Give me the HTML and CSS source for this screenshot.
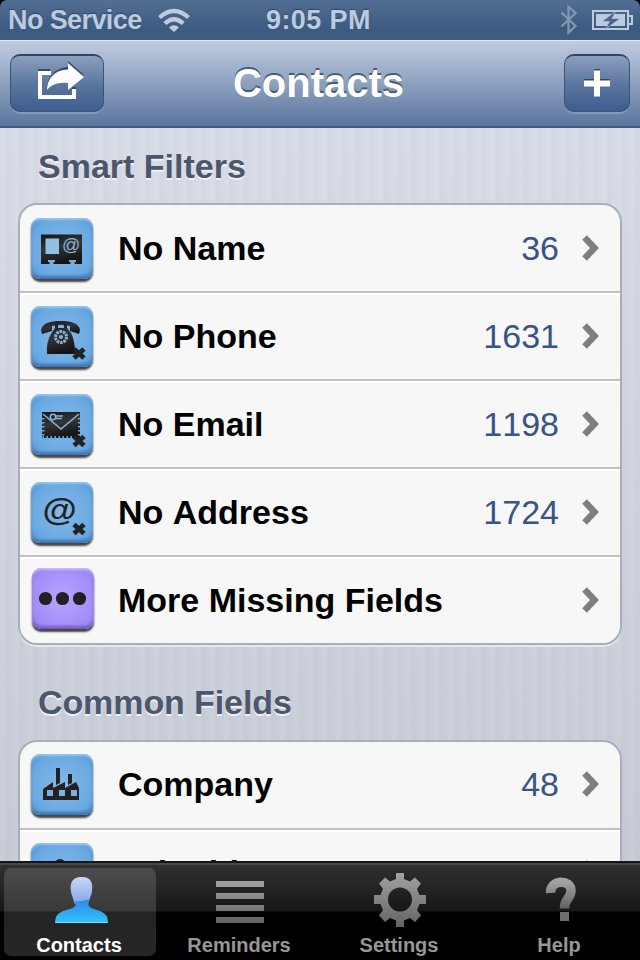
FILE: index.html
```html
<!DOCTYPE html>
<html lang="en">
<head>
<meta charset="utf-8">
<title>Contacts</title>
<link rel="stylesheet" href="styles.css">
</head>
<body>
<svg class="defs" width="0" height="0" aria-hidden="true">
  <defs>
    <linearGradient id="ink" x1="0" y1="0" x2="0.3" y2="1"><stop offset="0" stop-color="#161616"/><stop offset=".5" stop-color="#353535"/><stop offset="1" stop-color="#151515"/></linearGradient>
    <linearGradient id="grey" x1="0" y1="0" x2="0" y2="1"><stop offset="0" stop-color="#a2a2a2"/><stop offset="1" stop-color="#626262"/></linearGradient>
    <linearGradient id="head" x1="0" y1="0" x2="0" y2="1"><stop offset="0" stop-color="#c9d6f6"/><stop offset="1" stop-color="#83a6e6"/></linearGradient>
    <linearGradient id="bust" x1="0" y1="0" x2="0" y2="1"><stop offset="0" stop-color="#2f86ea"/><stop offset="1" stop-color="#31c5fa"/></linearGradient>
    <path id="cross" d="M-5-4.500 5 4.500M5-4.500-5 4.500" stroke="#222" stroke-width="4.800"/>
    <path id="chev" d="M2.500 2.500 12.500 13 2.500 23.500" fill="none" stroke="#7f7f7f" stroke-width="6.500"/>
  </defs>
</svg>
<div class="phone">
  <header class="status">
    <span class="carrier">No Service</span>
    <svg class="wifi" width="32" height="24" viewBox="0 0 32 24"><g fill="none" stroke="#bccbdf" stroke-width="4.200"><path d="M1.500 9.500Q16-3.500 30.500 9.500"/><path d="M6.800 15.500Q16 7 25.200 15.500"/></g><path d="M11 19.500Q16 15 21 19.500L16 24Z" fill="#bccbdf"/></svg>
    <span class="clock">9:05 PM</span>
    <svg class="bluetooth" width="18" height="32" viewBox="0 0 18 32"><path d="M1.500 8.500 15.500 22 8.500 28.500V3L15.500 9 1.500 22.500" fill="none" stroke="#8097b4" stroke-width="2.300"/></svg>
    <svg class="battery" width="44" height="22" viewBox="0 0 44 22"><path d="M2 2H37V20H2Z" fill="none" stroke="#bccbdf" stroke-width="2"/><path d="M5 5H34V17H5Z" fill="#bccbdf"/><path d="M38 7H41V15H38" fill="none" stroke="#bccbdf" stroke-width="2"/><path d="M25 2 11 12.500H18.500L14 20.500 29 9.500H21Z" fill="#48648a" stroke="#bccbdf" stroke-width=".6"/></svg>
  </header>
  <nav class="navbar">
    <button class="navbtn share" aria-label="Share"><svg width="50" height="42" viewBox="0 0 50 42"><path d="M16 10H6V36H40V26" fill="none" stroke="#344a6b" stroke-width="4"/><path d="M34 0 50 14 34 27V20C23 19 17 22 13 28 13 16 20 7 34 6Z" fill="#344a6b"/><path d="M17 12H6V36H40V28" fill="none" stroke="#fff" stroke-width="4"/><path d="M34 2 50 16 34 29V22C23 21 17 24 13 29 13 18 20 9 34 8.500Z" fill="#fff"/></svg></button>
    <h1>Contacts</h1>
    <button class="navbtn add" aria-label="Add"><svg width="26" height="28" viewBox="0 0 26 28"><path d="M10 0H16V10H26V16H0V10H10Z" fill="#344a6b"/><path d="M10 1.500H16V11.500H26V17.500H16V27.500H10V17.500H0V11.500H10Z" fill="#fff"/></svg></button>
  </nav>
  <main class="content">
    <h2>Smart Filters</h2>
    <section class="card">
      <div class="row"><span class="tile"><svg viewBox="0 0 62 62"><path fill="url(#ink)" d="M10 16.500H51V46H10Z"/><path d="M14.500 20.500H28V36H14.500Z" fill="#92bfe5"/><path fill="#79acdb" d="M17 42H24V44H22.500V46H18.500V44H17ZM38 42H45V44H43.500V46H39.500V44H38Z"/><text class="at-small" x="31" y="33">@</text></svg></span><span class="label">No Name</span><span class="count">36</span><svg class="chevron" viewBox="0 0 18 26"><use href="#chev"/></svg></div>
      <div class="row"><span class="tile"><svg viewBox="0 0 62 62"><path d="M10 24C11 17 20 15 30 15S48 17 49 24L48 28 39 25V20Q30 18 21 20V25L11 28Z" fill="url(#ink)"/><path d="M20 28 24 22V18H27V22H33V18H36V22L40 27Q44 34 44 48H16Q15 36 20 28Z" fill="url(#ink)"/><circle cx="30" cy="31" r="5.500" fill="none" stroke="#85b4dd" stroke-width="3" stroke-dasharray="2.500 .9"/><circle cx="30" cy="31" r="2" fill="#85b4dd"/><use href="#cross" transform="translate(48 47.500)"/></svg></span><span class="label">No Phone</span><span class="count">1631</span><svg class="chevron" viewBox="0 0 18 26"><use href="#chev"/></svg></div>
      <div class="row"><span class="tile"><svg viewBox="0 0 62 62"><rect x="11" y="18" width="38" height="26" fill="url(#ink)"/><path d="M11.500 24V44H45" fill="none" stroke="#6ca9df" stroke-width="4" stroke-dasharray="1.500 2.500"/><path d="M48.500 24V43" fill="none" stroke="#6ca9df" stroke-width="3" stroke-dasharray="1.500 2.500"/><path d="M12 20 30 35 48 20" fill="none" stroke="#89b6df" stroke-width="1.500"/><circle cx="22" cy="23" r="2.700" fill="none" stroke="#89b6df" stroke-width="1.500"/><path d="M25 22H32M25 24.500H31" stroke="#89b6df" stroke-width="1.300"/><use href="#cross" transform="translate(48 47)"/></svg></span><span class="label">No Email</span><span class="count">1198</span><svg class="chevron" viewBox="0 0 18 26"><use href="#chev"/></svg></div>
      <div class="row"><span class="tile"><svg viewBox="0 0 62 62"><text class="at-large" transform="translate(11 39) scale(1 .88)">@</text><use href="#cross" transform="translate(48 47)"/></svg></span><span class="label">No Address</span><span class="count">1724</span><svg class="chevron" viewBox="0 0 18 26"><use href="#chev"/></svg></div>
      <div class="row"><span class="tile violet"><svg viewBox="0 0 62 62"><g fill="#251f25"><circle cx="13.500" cy="30.500" r="6.600"/><circle cx="30.500" cy="30.500" r="6.600"/><circle cx="47.500" cy="30.500" r="6.600"/></g></svg></span><span class="label">More Missing Fields</span><svg class="chevron" viewBox="0 0 18 26"><use href="#chev"/></svg></div>
    </section>
    <h2 class="second">Common Fields</h2>
    <section class="card common">
      <div class="row"><span class="tile"><svg viewBox="0 0 62 62"><path fill="#222" fill-rule="evenodd" d="M12 46V35L22 28V34L34 28V34L45 28 48 34V46ZM16 36V42H22V36ZM28 36V42H34V36ZM40 36V42H46V36ZM25 14H29V29L25 31ZM37 20H41V29L37 31Z"/></svg></span><span class="label">Company</span><span class="count">48</span><svg class="chevron" viewBox="0 0 18 26"><use href="#chev"/></svg></div>
      <div class="row"><span class="tile"><svg viewBox="0 0 62 62"><circle cx="29" cy="22" r="6" fill="#222"/><path d="M16 45Q18 28 29 28T42 45Z" fill="#222"/></svg></span><span class="label">Job Title</span><span class="count">5</span><svg class="chevron" viewBox="0 0 18 26"><use href="#chev"/></svg></div>
    </section>
  </main>
  <footer class="tabs">
    <div class="tab active"><svg width="56" height="56" viewBox="0 0 56 56"><path d="M23 31C21 28 21 24 19.500 21 17.500 11 19 4 30 4 40 4 41.500 11 39.500 21 38 24 38 27 36 30Z" fill="url(#head)"/><path d="M22.500 28.500Q30 28.500 38 26L36.500 30V32C37.500 36 44 36 49 38.500Q56 41 56 50H3Q3 41 10 38.500C16 36 22 36 23.500 32V30Z" fill="url(#bust)"/><path d="M3.500 49.500H55.500" stroke="#83dcff"/></svg><span>Contacts</span></div>
    <div class="tab"><svg width="56" height="56" viewBox="0 0 56 56"><path d="M4 8H52V14H4ZM4 20H52V26H4ZM4 32H52V38H4ZM4 44H52V50H4Z" fill="url(#grey)"/></svg><span>Reminders</span></div>
    <div class="tab"><svg width="56" height="56" viewBox="0 0 56 56"><path fill="url(#grey)" fill-rule="evenodd" d="M24 0H32V6L38 8.500 43 4.500 49 10.500 45 16 47.500 22H54V31H47.500L45 37 49 42.500 43 49 38 45 32 47.500V54H24V47.500L18 45 13 49 7 42.500 11 37 8.500 31H2V22H8.500L11 16 7 10.500 13 4.500 18 8.500 24 6ZM40 26.500A12 12 0 1 0 16 26.500 12 12 0 1 0 40 26.500Z"/></svg><span>Settings</span></div>
    <div class="tab"><svg width="56" height="56" viewBox="0 0 56 56"><path fill="none" stroke="url(#grey)" stroke-width="9.500" d="M18.500 20C18 6 39 6 39 17.500 39 26 32.500 25 32.500 35.500"/><path d="M28 39H37V48H28Z" fill="#6d6d6d"/></svg><span>Help</span></div>
  </footer>
</div>
</body>
</html>
```

FILE: styles.css
```css
* { box-sizing: border-box; }
body {
  margin: 0;
  background: #000;
  font-family: "Liberation Sans", Arial, sans-serif;
  font-kerning: none;
}
.defs { position: absolute; }
.phone {
  width: 640px;
  height: 960px;
  display: flex;
  flex-direction: column;
  overflow: hidden;
}
.status {
  flex: none;
  height: 40px;
  display: flex;
  align-items: center;
  padding: 0 5px 0 8px;
  border-radius: 7px 7px 0 0;
  background: linear-gradient(#536f93, #3d5a80 70%, #3e5b82);
  color: #bccbdf;
  font-size: 27px;
  font-weight: bold;
  text-shadow: 0 -1px 1px #2f4668;
  white-space: nowrap;
}
.carrier { width: 150px; letter-spacing: -.6px; }
.wifi { flex: none; }
.clock { width: 110px; margin-left: 76px; letter-spacing: .4px; }
.bluetooth { margin-left: auto; }
.battery { margin-left: 13px; }
.navbar {
  flex: none;
  height: 88px;
  display: flex;
  justify-content: space-between;
  padding: 13px 10px 0;
  border-top: 1px solid #e3eaf3;
  border-bottom: 2px solid #3f5a83;
  background: linear-gradient(#c0cce0, #8b9fbe 52%, #5a759d);
}
.navbtn {
  height: 58px;
  display: flex;
  align-items: center;
  justify-content: center;
  padding: 0;
  border: 1px solid #3b5375;
  border-top: 2px solid #35435e;
  border-radius: 10px;
  background: linear-gradient(#8d9fbd, #5c779f 50%, #3d5d90);
  box-shadow: 0 2px 0 #8399ba;
}
.share { width: 94px; padding-bottom: 3px; padding-left: 3px; }
.add { width: 66px; padding-bottom: 2px; }
h1 {
  margin: 6px 0 0 28px;
  height: 48px;
  flex: 1;
  text-align: center;
  padding-right: 59px;
  line-height: 46px;
  font-size: 40px;
  color: #fff;
  text-shadow: 0 -2px 0 #475a77;
}
.content {
  flex: 1;
  min-height: 0;
  overflow: hidden;
  padding: 0 18px;
  background:
    repeating-linear-gradient(90deg, rgba(255,255,255,.05) 0 5px, rgba(70,80,110,.015) 5px 10px, transparent 10px 14px),
    linear-gradient(#d6dbe5, #c5cad5);
}
h2 {
  margin: 0;
  height: 75px;
  padding: 18px 0 0 20px;
  font-size: 34px;
  line-height: 40px;
  color: #4c566c;
  text-shadow: 0 2px 0 #eef1f6;
}
.second { height: 95px; padding-top: 37px; letter-spacing: -.1px; }
.card {
  width: 604px;
  border: 2px solid #a9adb7;
  border-radius: 19px;
  background: #f7f7f7;
  box-shadow: 0 2px 0 #e4e8ef;
}
.row {
  height: 88px;
  display: flex;
  align-items: center;
  padding: 0 20px 0 11px;
  border-bottom: 2px solid #c1c1c1;
  box-shadow: inset 0 2px 0 #fff;
}
.row:first-child { box-shadow: none; }
.row:last-child { border-bottom: 0; height: 86px; }
.common .row { padding-bottom: 2px; }
.common .row:last-child { padding-bottom: 0; }
.tile {
  flex: none;
  width: 62px;
  height: 61px;
  border-radius: 9px;
  background: radial-gradient(#85b8e8, #69a9e2 70%, #5795d2);
  box-shadow: inset 0 2px 2px #9ac5ec, inset 0 -3px 3px #4078b5, 0 3px 2px #444;
}
.tile svg { width: 62px; height: 62px; display: block; }
.tile.violet {
  margin-left: 1px;
  margin-right: -1px;
  margin-top: -3px;
  background: radial-gradient(#b9a5ff, #a48df8 70%, #927be8);
  box-shadow: inset 0 2px 2px #c7bbff, inset 0 -3px 3px #755cc4, 0 3px 2px #444;
}
.label {
  flex: 1;
  margin-left: 25px;
  font-size: 34px;
  line-height: 40px;
  font-weight: bold;
  color: #000;
}
.count { margin-right: 1px; font-size: 34px; line-height: 40px; color: #385487; }
.common .row:last-child .label,
.common .row:last-child .count { margin-top: -2px; }
.chevron { flex: none; width: 18px; height: 26px; margin-left: 22px; }
.at-small { font: 18px "Liberation Sans", sans-serif; fill: #85b4dd; }
.at-large { font: italic bold 35px "Liberation Sans", sans-serif; fill: #222; }
.tabs {
  flex: none;
  height: 99px;
  display: flex;
  border-top: 2px solid #131517;
  background: linear-gradient(#494949 0 2px, #303030 2px, #171717 48px, #000 49px);
}
.tab {
  width: 152px;
  height: 88px;
  margin: 5px 4px 0;
  padding-top: 5px;
  display: flex;
  flex-direction: column;
  align-items: center;
  border-radius: 7px;
  color: #979797;
  font-size: 20px;
  line-height: 24px;
  font-weight: bold;
}
.tab svg { flex: none; overflow: visible; }
.tab span { margin: 4px 2px 0 0; }
.active { color: #fff; background: linear-gradient(#4b4b4b, #393939 43px, #242424 44px, #262626); }
```
